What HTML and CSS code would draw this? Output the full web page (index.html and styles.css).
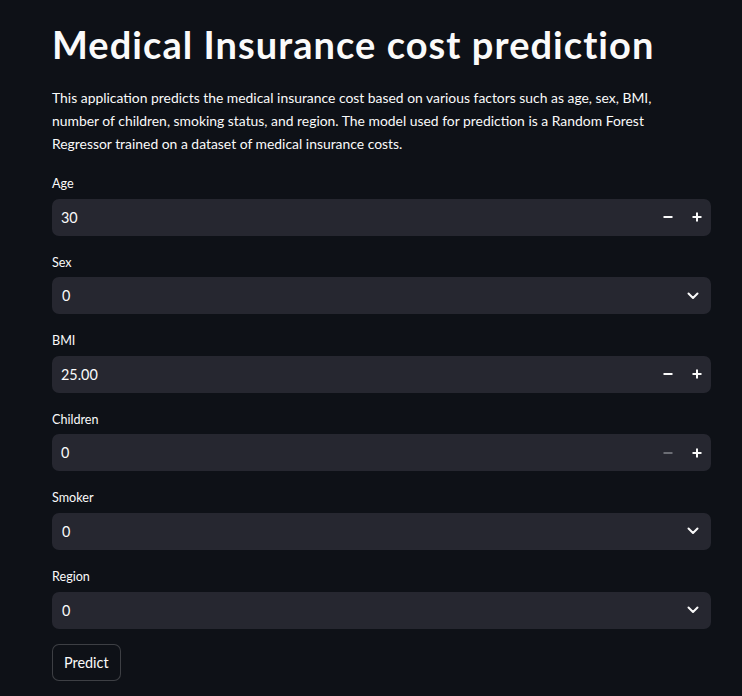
FILE: index.html
```html
<!DOCTYPE html>
<html>
<head>
<meta charset="utf-8">
<link rel="stylesheet" href="styles.css">
</head>
<body>
<main class="main">
  <h1 class="title">Medical Insurance cost prediction</h1>
  <p class="intro">This application predicts the medical insurance cost based on various factors such as age, sex, BMI, number of children, smoking status, and region. The model used for prediction is a Random Forest Regressor trained on a dataset of medical insurance costs.</p>

  <div class="field">
    <label class="label">Age</label>
    <div class="box">
      <span class="value">30</span>
      <span class="step"><svg width="10" height="10" viewBox="0 0 10 10"><rect x="0.5" y="4" width="9" height="2" fill="#fafafa"/></svg></span>
      <span class="step"><svg width="10" height="10" viewBox="0 0 10 10"><rect x="0.5" y="4" width="9" height="2" fill="#fafafa"/><rect x="4" y="0.5" width="2" height="9" fill="#fafafa"/></svg></span>
    </div>
  </div>

  <div class="field">
    <label class="label">Sex</label>
    <div class="box select">
      <span class="value">0</span>
      <span class="chev"><svg width="12" height="8" viewBox="0 0 12 8"><path d="M1.5 1.5 L6 6 L10.5 1.5" fill="none" stroke="#fafafa" stroke-width="2" stroke-linecap="round" stroke-linejoin="round"/></svg></span>
    </div>
  </div>

  <div class="field">
    <label class="label">BMI</label>
    <div class="box">
      <span class="value">25.00</span>
      <span class="step"><svg width="10" height="10" viewBox="0 0 10 10"><rect x="0.5" y="4" width="9" height="2" fill="#fafafa"/></svg></span>
      <span class="step"><svg width="10" height="10" viewBox="0 0 10 10"><rect x="0.5" y="4" width="9" height="2" fill="#fafafa"/><rect x="4" y="0.5" width="2" height="9" fill="#fafafa"/></svg></span>
    </div>
  </div>

  <div class="field">
    <label class="label">Children</label>
    <div class="box">
      <span class="value">0</span>
      <span class="step disabled"><svg width="10" height="10" viewBox="0 0 10 10"><rect x="0.5" y="4" width="9" height="2" fill="#fafafa"/></svg></span>
      <span class="step"><svg width="10" height="10" viewBox="0 0 10 10"><rect x="0.5" y="4" width="9" height="2" fill="#fafafa"/><rect x="4" y="0.5" width="2" height="9" fill="#fafafa"/></svg></span>
    </div>
  </div>

  <div class="field">
    <label class="label">Smoker</label>
    <div class="box select">
      <span class="value">0</span>
      <span class="chev"><svg width="12" height="8" viewBox="0 0 12 8"><path d="M1.5 1.5 L6 6 L10.5 1.5" fill="none" stroke="#fafafa" stroke-width="2" stroke-linecap="round" stroke-linejoin="round"/></svg></span>
    </div>
  </div>

  <div class="field">
    <label class="label">Region</label>
    <div class="box select">
      <span class="value">0</span>
      <span class="chev"><svg width="12" height="8" viewBox="0 0 12 8"><path d="M1.5 1.5 L6 6 L10.5 1.5" fill="none" stroke="#fafafa" stroke-width="2" stroke-linecap="round" stroke-linejoin="round"/></svg></span>
    </div>
  </div>

  <button class="btn">Predict</button>
</main>
</body>
</html>
```

FILE: styles.css
```css
html, body {
  margin: 0;
  padding: 0;
  background: #0e1117;
  color: #fafafa;
  font-family: "Lato", "Open Sans", sans-serif;
}
.main {
  width: 659px;
  padding: 20px 31px 0 52px;
}
.title {
  margin: 0;
  font-size: 38px;
  font-weight: 700;
  line-height: 48px;
  letter-spacing: 1.05px;
}
.intro {
  max-width: 632px;
  margin: 18px 0 18px 0;
  font-size: 13.9px;
  line-height: 23px;
}
.field {
  display: flex;
  flex-direction: column;
  margin-bottom: 16px;
}
.label {
  font-size: 12.6px;
  line-height: 21.6px;
  margin-bottom: 4px;
}
.box {
  height: 37px;
  background: #262730;
  border-radius: 7px;
  display: flex;
  align-items: center;
  padding-left: 9px;
  font-size: 14.4px;
}
.box.select {
  padding-left: 10px;
  padding-right: 12px;
}
.value {
  flex: 1;
}
.step {
  width: 29px;
  height: 37px;
  display: flex;
  align-items: center;
  justify-content: center;
}
.step.disabled svg rect {
  fill: #6b6d74;
}
.chev {
  display: flex;
  align-items: center;
}
.btn {
  font-family: inherit;
  font-size: 14.4px;
  color: #fafafa;
  background: #0e1117;
  border: 1px solid rgba(250, 250, 250, 0.2);
  border-radius: 7px;
  height: 37px;
  padding: 0 11px;
  margin-top: -1px;
}
```
